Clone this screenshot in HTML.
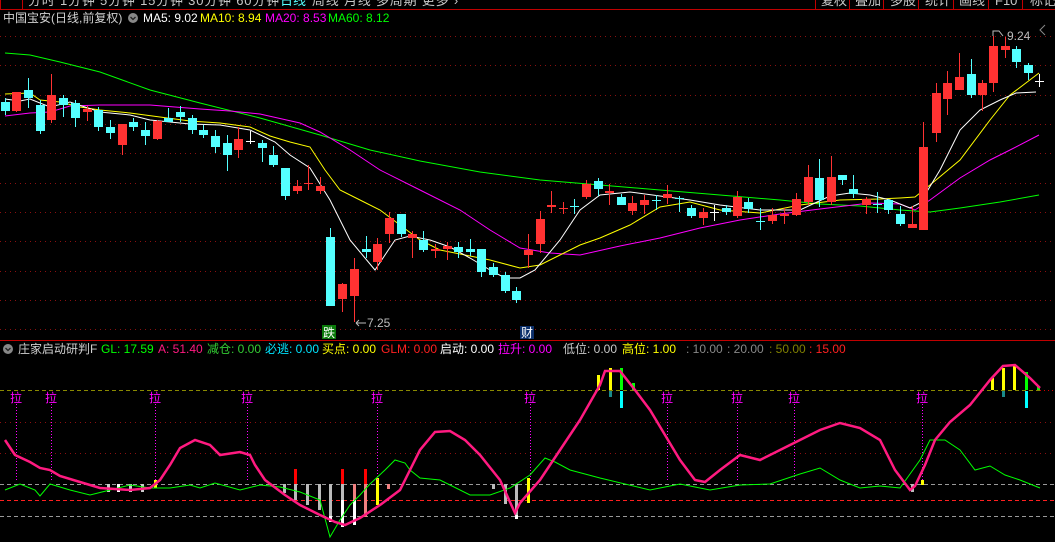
<!DOCTYPE html><html><head><meta charset="utf-8"><style>
html,body{margin:0;padding:0;background:#000;width:1055px;height:542px;overflow:hidden}
svg{display:block;font-family:"Liberation Sans","Noto Sans CJK SC",sans-serif}
</style></head><body>
<svg id="s" width="1055" height="542" viewBox="0 0 1055 542">
<rect width="1055" height="542" fill="#000"/>
<g font-size="13" fill="#c8c8c8">
<text x="28" y="5" letter-spacing="0.8">分时 1分钟 5分钟 15分钟 30分钟 60分钟</text>
<text x="280" y="5" fill="#54ffff">日线</text>
<text x="312" y="5" letter-spacing="0.8">周线  月线  多周期  更多 ›</text>
<text x="821" y="5">复权</text><text x="855" y="5">叠加</text><text x="890" y="5">多股</text><text x="925" y="5">统计</text><text x="959" y="5">画线</text><text x="995" y="5">F10</text><text x="1030" y="5">标记</text>
</g>
<g stroke="#c00000" stroke-width="1" fill="none">
<line x1="0" y1="9.5" x2="1055" y2="9.5"/>
<polyline points="0.5,0 0.5,9.5 22.5,9.5 22.5,0"/>
<line x1="815.5" y1="0" x2="815.5" y2="9"/><line x1="849.5" y1="0" x2="849.5" y2="9"/><line x1="883.5" y1="0" x2="883.5" y2="9"/><line x1="918.5" y1="0" x2="918.5" y2="9"/><line x1="953.5" y1="0" x2="953.5" y2="9"/><line x1="988.5" y1="0" x2="988.5" y2="9"/><line x1="1022.5" y1="0" x2="1022.5" y2="9"/>
<line x1="0" y1="340.5" x2="1055" y2="340.5"/>
</g>
<g font-size="12">
<text x="3" y="22" fill="#d0d0d0">中国宝安(日线,前复权)</text>
<circle cx="133" cy="18" r="5" fill="#888"/><path d="M130.5 17l2.5 2.5 2.5-2.5" stroke="#222" fill="none" stroke-width="1.3"/>
<text x="143" y="22" fill="#fff">MA5: 9.02</text>
<text x="200" y="22" fill="#ffff00">MA10: 8.94</text>
<text x="265" y="22" fill="#ff00ff">MA20: 8.53</text>
<text x="328" y="22" fill="#00ff00">MA60: 8.12</text>
</g>
<g id="grid" stroke="#8a1010" stroke-dasharray="1 4"></g>
<g id="ma"></g>
<g id="cd"></g>
<rect x="322" y="325" width="14" height="14" fill="#0a7a0a"/><text x="323" y="337" font-size="12" fill="#fff">跌</text>
<path d="M356 323h10M356 323l3-3M356 323l3 3" stroke="#bbb" fill="none"/><text x="367" y="327" font-size="12" fill="#bbb">7.25</text>
<rect x="520" y="326" width="14" height="13" fill="#0b2f6a"/><text x="521" y="337" font-size="12" fill="#fff">财</text>
<path d="M993 36v-5h6l4 5" stroke="#bbb" fill="none"/><text x="1007" y="40" font-size="12" fill="#bbb">9.24</text>
<path d="M1045 25l-5 5 5 5" stroke="#888" fill="none"/>
<g font-size="12">
<circle cx="8" cy="349" r="5" fill="#888"/><path d="M5.5 348l2.5 2.5 2.5-2.5" stroke="#222" fill="none" stroke-width="1.3"/>
<text x="18" y="353" fill="#d0d0d0">庄家启动研判F</text>
<text x="101" y="353" fill="#00ff00">GL: 17.59</text>
<text x="158" y="353" fill="#ff1a80">A: 51.40</text>
<text x="207" y="353" fill="#33cc33">减仓: 0.00</text>
<text x="265" y="353" fill="#00e5ff">必逃: 0.00</text>
<text x="322" y="353" fill="#ffff00">买点: 0.00</text>
<text x="381" y="353" fill="#ff2020">GLM: 0.00</text>
<text x="440" y="353" fill="#fff">启动: 0.00</text>
<text x="498" y="353" fill="#ff00ff">拉升: 0.00</text>
<text x="563" y="353" fill="#c8c8c8">低位: 0.00</text>
<text x="622" y="353" fill="#ffff00">高位: 1.00</text>
<text x="686" y="353" fill="#888">: 10.00</text>
<text x="727" y="353" fill="#888">: 20.00</text>
<text x="769" y="353" fill="#808000">: 50.00</text>
<text x="809" y="353" fill="#ff2020">: 15.00</text>
</g>
<line x1="0" y1="390.5" x2="1040" y2="390.5" stroke="#8a8a00" stroke-dasharray="4 3"/>
<line x1="1040" y1="390.5" x2="1055" y2="390.5" stroke="#c00" stroke-dasharray="1 3"/>
<line x1="0" y1="422.5" x2="1055" y2="422.5" stroke="#8a1010" stroke-dasharray="1 4"/>
<line x1="0" y1="453.5" x2="1055" y2="453.5" stroke="#8a1010" stroke-dasharray="1 4"/>
<line x1="0" y1="484.5" x2="1055" y2="484.5" stroke="#999" stroke-dasharray="4 3"/>
<line x1="0" y1="500.5" x2="1055" y2="500.5" stroke="#ff2020" stroke-dasharray="4 3"/>
<line x1="0" y1="516.5" x2="1055" y2="516.5" stroke="#999" stroke-dasharray="4 3"/>
<g id="lw"></g>
</svg>
<script>
var NS="http://www.w3.org/2000/svg";
function el(p,t,a){var e=document.createElementNS(NS,t);for(var k in a)e.setAttribute(k,a[k]);document.getElementById(p).appendChild(e);return e;}
[36,65,95,124,153,183,212,241,271,300,329].forEach(function(y){el("grid","line",{x1:0,x2:1055,y1:y+.5,y2:y+.5});});
function pl(p,pts,c,w){el(p,"polyline",{points:pts,fill:"none",stroke:c,"stroke-width":w||1});}
pl("ma","5,53 30,55 60,62 100,72 150,90 200,103 260,118 320,135 370,150 420,161 480,172 540,180 600,185 660,190 720,195 780,200 820,204 860,206 900,210 930,212 960,208 1000,202 1039,195","#00ff00");
pl("ma","5,116 30,113 50,112 70,106 100,105 150,105 200,109 230,111 260,114 300,123 320,132 350,150 380,170 420,190 460,210 490,230 520,248 550,253 580,255 620,246 660,238 700,228 740,220 780,214 820,209 870,203 900,204 915,210 930,200 960,178 990,160 1010,150 1039,135","#ff00ff");
pl("ma","5,94 30,93 40,100 60,102 80,107 100,110 130,113 160,117 190,121 220,123 250,127 270,136 290,142 310,147 325,170 340,190 360,200 380,210 400,225 420,240 440,250 460,254 490,260 520,268 540,265 560,255 580,245 600,238 630,225 660,207 690,202 720,210 760,213 800,205 840,200 880,199 900,198 915,197 930,185 960,160 990,120 1010,95 1039,73","#ffff00");
pl("ma","5,99 20,101 30,99 50,107 70,102 100,112 130,115 150,120 170,122 190,124 220,125 250,130 275,142 290,155 310,168 330,200 350,240 375,270 395,240 410,236 430,240 450,247 470,258 490,270 505,278 520,278 535,270 560,240 580,210 600,195 630,192 660,196 690,200 720,205 760,210 800,210 830,196 850,193 870,195 890,200 910,208 920,203 940,170 960,130 980,110 1000,100 1016,93 1036,92","#fff");
var C=[[5,'c',102,111,98,115],[16,'r',92,111,92,112],[28,'c',90,98,78,108],[40,'c',105,131,100,134],[51,'r',95,120,74,123],[63,'c',98,105,95,117],[75,'c',103,118,100,127],[87,'r',109,112,106,121],[98,'c',110,127,107,131],[110,'c',127,133,120,139],[122,'r',124,145,124,155],[133,'c',122,127,118,131],[145,'c',130,136,122,145],[157,'r',121,139,120,140],[168,'c',118,122,108,122],[180,'c',112,117,106,122],[192,'c',118,130,115,134],[203,'c',130,135,125,138],[215,'c',136,147,130,153],[227,'c',143,155,135,171],[238,'r',139,150,127,158],[250,'w',141,141,131,144],[262,'c',143,148,140,162],[273,'c',155,165,146,167],[285,'c',168,196,168,200],[297,'r',186,191,180,194],[308,'r',183,183,165,190],[320,'r',186,191,177,194],[330,'c',237,306,228,306],[342,'r',284,299,283,312],[354,'r',269,296,258,322],[366,'c',249,252,236,258],[377,'r',244,262,238,270],[389,'r',218,234,212,243],[401,'c',214,234,214,237],[412,'r',234,238,231,258],[423,'c',240,250,231,252],[435,'r',249,251,244,258],[447,'r',246,249,242,260],[458,'c',247,252,242,258],[470,'c',249,252,239,256],[481,'c',249,272,249,277],[493,'c',267,275,263,277],[505,'c',275,291,272,293],[516,'c',291,300,287,303],[528,'r',250,255,234,268],[540,'r',219,244,211,253],[551,'r',205,207,191,213],[563,'r',208,208,202,214],[574,'c',206,206,199,214],[586,'r',184,197,180,199],[598,'c',181,189,178,196],[609,'r',191,193,184,205],[621,'c',197,205,194,205],[632,'r',203,211,196,215],[644,'r',200,205,195,214],[656,'c',200,200,195,210],[667,'r',194,198,185,204],[679,'c',198,198,196,212],[691,'c',208,216,205,218],[703,'r',212,218,208,225],[714,'w',212,212,205,221],[726,'c',208,212,205,215],[737,'r',197,216,191,218],[748,'c',202,209,198,213],[760,'c',221,221,208,230],[772,'r',215,221,208,224],[784,'r',214,216,208,224],[796,'r',199,215,193,216],[808,'r',177,202,165,205],[819,'c',178,200,159,207],[831,'r',177,202,156,205],[842,'c',175,180,175,185],[853,'c',189,194,175,198],[866,'r',199,205,197,214],[877,'c',204,204,192,213],[888,'c',200,210,199,214],[900,'c',214,224,206,226],[912,'r',224,228,206,228],[923,'r',147,230,122,230],[936,'r',93,133,83,142],[947,'r',83,99,71,115],[959,'r',77,90,53,90],[971,'c',74,95,59,98],[982,'r',83,95,80,111],[993,'r',46,83,36,92],[1005,'r',46,50,37,58],[1016,'c',49,62,46,68],[1028,'c',65,73,63,80],[1039,'w',81,81,74,87]];
C.forEach(function(d){var col=d[1]=='r'?'#ff3232':d[1]=='c'?'#54ffff':'#fff';
el("cd","line",{x1:d[0]+.5,x2:d[0]+.5,y1:d[4],y2:d[5],stroke:col});
var h=Math.max(d[3]-d[2],1);el("cd","rect",{x:d[0]-4,y:d[2],width:9,height:h,fill:col});});
function b(x,y1,y2,c,w){el("lw","rect",{x:x-1,y:Math.min(y1,y2),width:w||3,height:Math.abs(y2-y1),fill:c});}
[[108,484,492,'#ccc'],[118,484,492,'#fff'],[130,484,492,'#ccc'],[142,484,492,'#ccc'],[155,480,488,'#ffff00'],
[284,484,493,'#bbb'],[295,469,484,'#ff0000'],[295,484,500,'#bbb'],[307,484,505,'#bbb'],[319,484,510,'#bbb'],[330,484,516,'#bbb'],[330,516,522,'#fff'],[342,469,484,'#ff0000'],[342,484,500,'#bbb'],[342,500,527,'#fff'],[354,484,500,'#f08080'],[354,500,525,'#fff'],[365,469,484,'#ff0000'],[365,484,517,'#f08080'],[377,478,505,'#ffff00'],[388,484,489,'#f08080'],
[493,484,489,'#bbb'],[505,484,504,'#bbb'],[516,484,515,'#bbb'],[516,515,519,'#fff'],[528,478,503,'#ffff00'],[912,484,492,'#bbb'],[922,480,485,'#ffff00'],
[598,375,390,'#ffff00'],[610,368,390,'#ffff00'],[621,368,390,'#00ff00'],[633,383,390,'#00ff00'],[621,391,408,'#00ffff'],[610,391,397,'#1a8a8a'],
[992,378,390,'#ffff00'],[1003,368,390,'#ffff00'],[1014,365,390,'#ffff00'],[1026,372,390,'#00ff00'],[1038,386,390,'#00ff00'],[1026,391,408,'#00ffff'],[1003,391,397,'#1a8a8a']].forEach(function(a){b(a[0],a[1],a[2],a[3]);});
[16,51,155,247,377,530,667,737,794,922].forEach(function(x){
el("lw","line",{x1:x+.5,x2:x+.5,y1:404,y2:480,stroke:"#ff00ff","stroke-dasharray":"1 2"});
var t=el("lw","text",{x:x-6,y:402,"font-size":"12",fill:"#ff00ff"});t.textContent="拉";});
pl("lw","5,490 20,484 35,490 40,496 50,484 70,490 90,495 110,490 130,485 150,488 170,488 190,485 200,488 215,483 240,490 260,485 280,487 300,492 320,500 330,537 340,520 350,505 360,495 370,484 385,470 395,460 405,463 410,470 420,478 440,480 470,495 490,495 510,488 530,475 545,458 555,462 570,470 600,478 650,490 680,484 710,490 740,485 770,484 800,474 820,468 840,480 860,488 880,486 900,488 920,460 930,440 945,440 960,450 975,470 990,466 1005,475 1020,480 1040,488","#00ff00");
pl("lw","5,440 15,455 30,462 40,468 50,470 60,476 80,482 100,488 130,490 150,488 160,480 170,465 180,448 195,440 210,445 220,455 240,452 250,455 255,465 265,480 285,495 300,505 320,515 335,522 345,525 360,518 380,505 400,490 410,470 420,450 435,432 450,431 465,440 480,455 500,480 515,513 520,503 540,480 560,450 580,420 600,385 605,371 620,371 635,390 650,410 665,435 680,460 695,480 705,482 720,470 740,455 760,460 780,450 800,440 820,430 840,423 860,428 880,440 895,470 910,490 915,486 925,465 935,440 950,422 970,405 990,380 1003,366 1015,365 1030,378 1040,388","#ff1a80",2.5);
</script>
</body></html>
